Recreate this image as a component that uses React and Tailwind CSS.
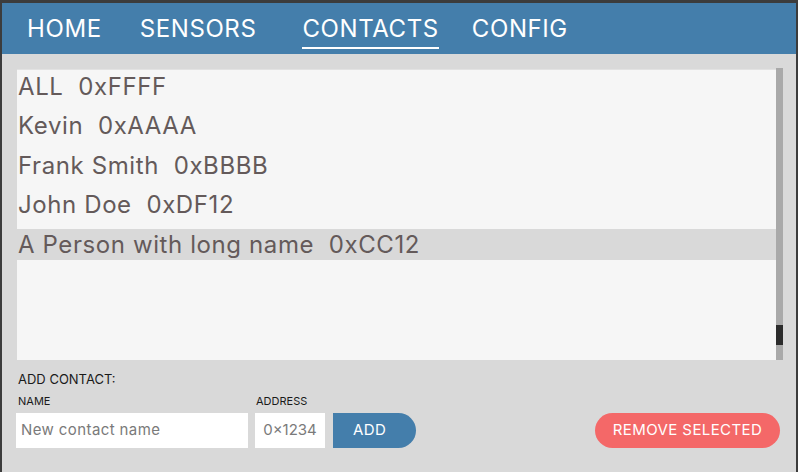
import React from "react";

const rows = [
  ["ALL", "0xFFFF"],
  ["Kevin", "0xAAAA"],
  ["Frank Smith", "0xBBBB"],
  ["John Doe", "0xDF12"],
  ["A Person with long name", "0xCC12"],
];

export default function App() {
  return (
    <div
      className="w-[798px] h-[472px] bg-[#3c3c3c] pt-[3px] pl-[2px] pr-[2px] overflow-hidden"
      style={{ fontFamily: "Inter, 'Noto Sans', sans-serif" }}
    >
      <div className="h-full bg-[#d9d9d9] flex flex-col">
        <nav className="h-[51px] bg-[#447eab] flex items-center text-white text-[24px] leading-none tracking-[0.6px]">
          <span className="ml-[25px]">HOME</span>
          <span className="ml-[38px]">SENSORS</span>
          <span className="ml-[46px] relative">
            CONTACTS
            <span className="absolute left-0 right-0 top-[30px] h-[2px] bg-white"></span>
          </span>
          <span className="ml-[33px]">CONFIG</span>
        </nav>

        <div className="mt-[15px] ml-[15px] flex h-[291px]">
          <div className="w-[759px] h-full bg-[#f6f6f6] border-t border-[#e2e2e2] pt-[1px] text-[#645a5a] text-[24px] leading-none tracking-[0.6px]">
            {rows.map(([n, a], i) => (
              <div
                key={i}
                className={`h-[31px] mb-[8.5px] flex items-center pl-[1px] whitespace-pre ${
                  i === 4 ? "bg-[#d9d9d9]" : ""
                }`}
              >
                {n}  {a}
              </div>
            ))}
          </div>
          <div className="w-[7px] h-[292px] -mt-[1px] bg-[#a9a9a9] relative">
            <div className="absolute left-0 right-0 top-[257px] h-[20px] bg-[#2b2b2b]"></div>
          </div>
        </div>

        <div className="ml-[16px] mt-[13px] text-[13px] leading-none text-[#1a1a1a]">ADD CONTACT:</div>
        <div className="flex mt-[10px] ml-[14px] items-end">
          <div className="flex flex-col">
            <span className="text-[11px] leading-none text-[#1a1a1a] ml-[2px] mb-[6px]">NAME</span>
            <div className="w-[232px] h-[35px] bg-white flex items-center pl-[5px] text-[15px] tracking-[0.4px] text-[#7a7a7a]">
              New contact name
            </div>
          </div>
          <div className="flex flex-col ml-[7px]">
            <span className="text-[11px] leading-none text-[#1a1a1a] ml-[1px] mb-[6px]">ADDRESS</span>
            <div className="w-[70px] h-[35px] bg-white flex items-center justify-center text-[15px] text-[#7a7a7a]">
              0×1234
            </div>
          </div>
          <div className="ml-[8px] w-[83px] h-[35px] bg-[#447eab] rounded-l-[3px] rounded-r-full flex items-center pl-[20px] text-white text-[15px] tracking-[0.4px]">
            ADD
          </div>
          <div className="ml-auto mr-[16px] w-[185px] h-[35px] bg-[#f46868] rounded-full flex items-center justify-center text-white text-[15px] tracking-[0.4px]">
            REMOVE SELECTED
          </div>
        </div>
      </div>
    </div>
  );
}
